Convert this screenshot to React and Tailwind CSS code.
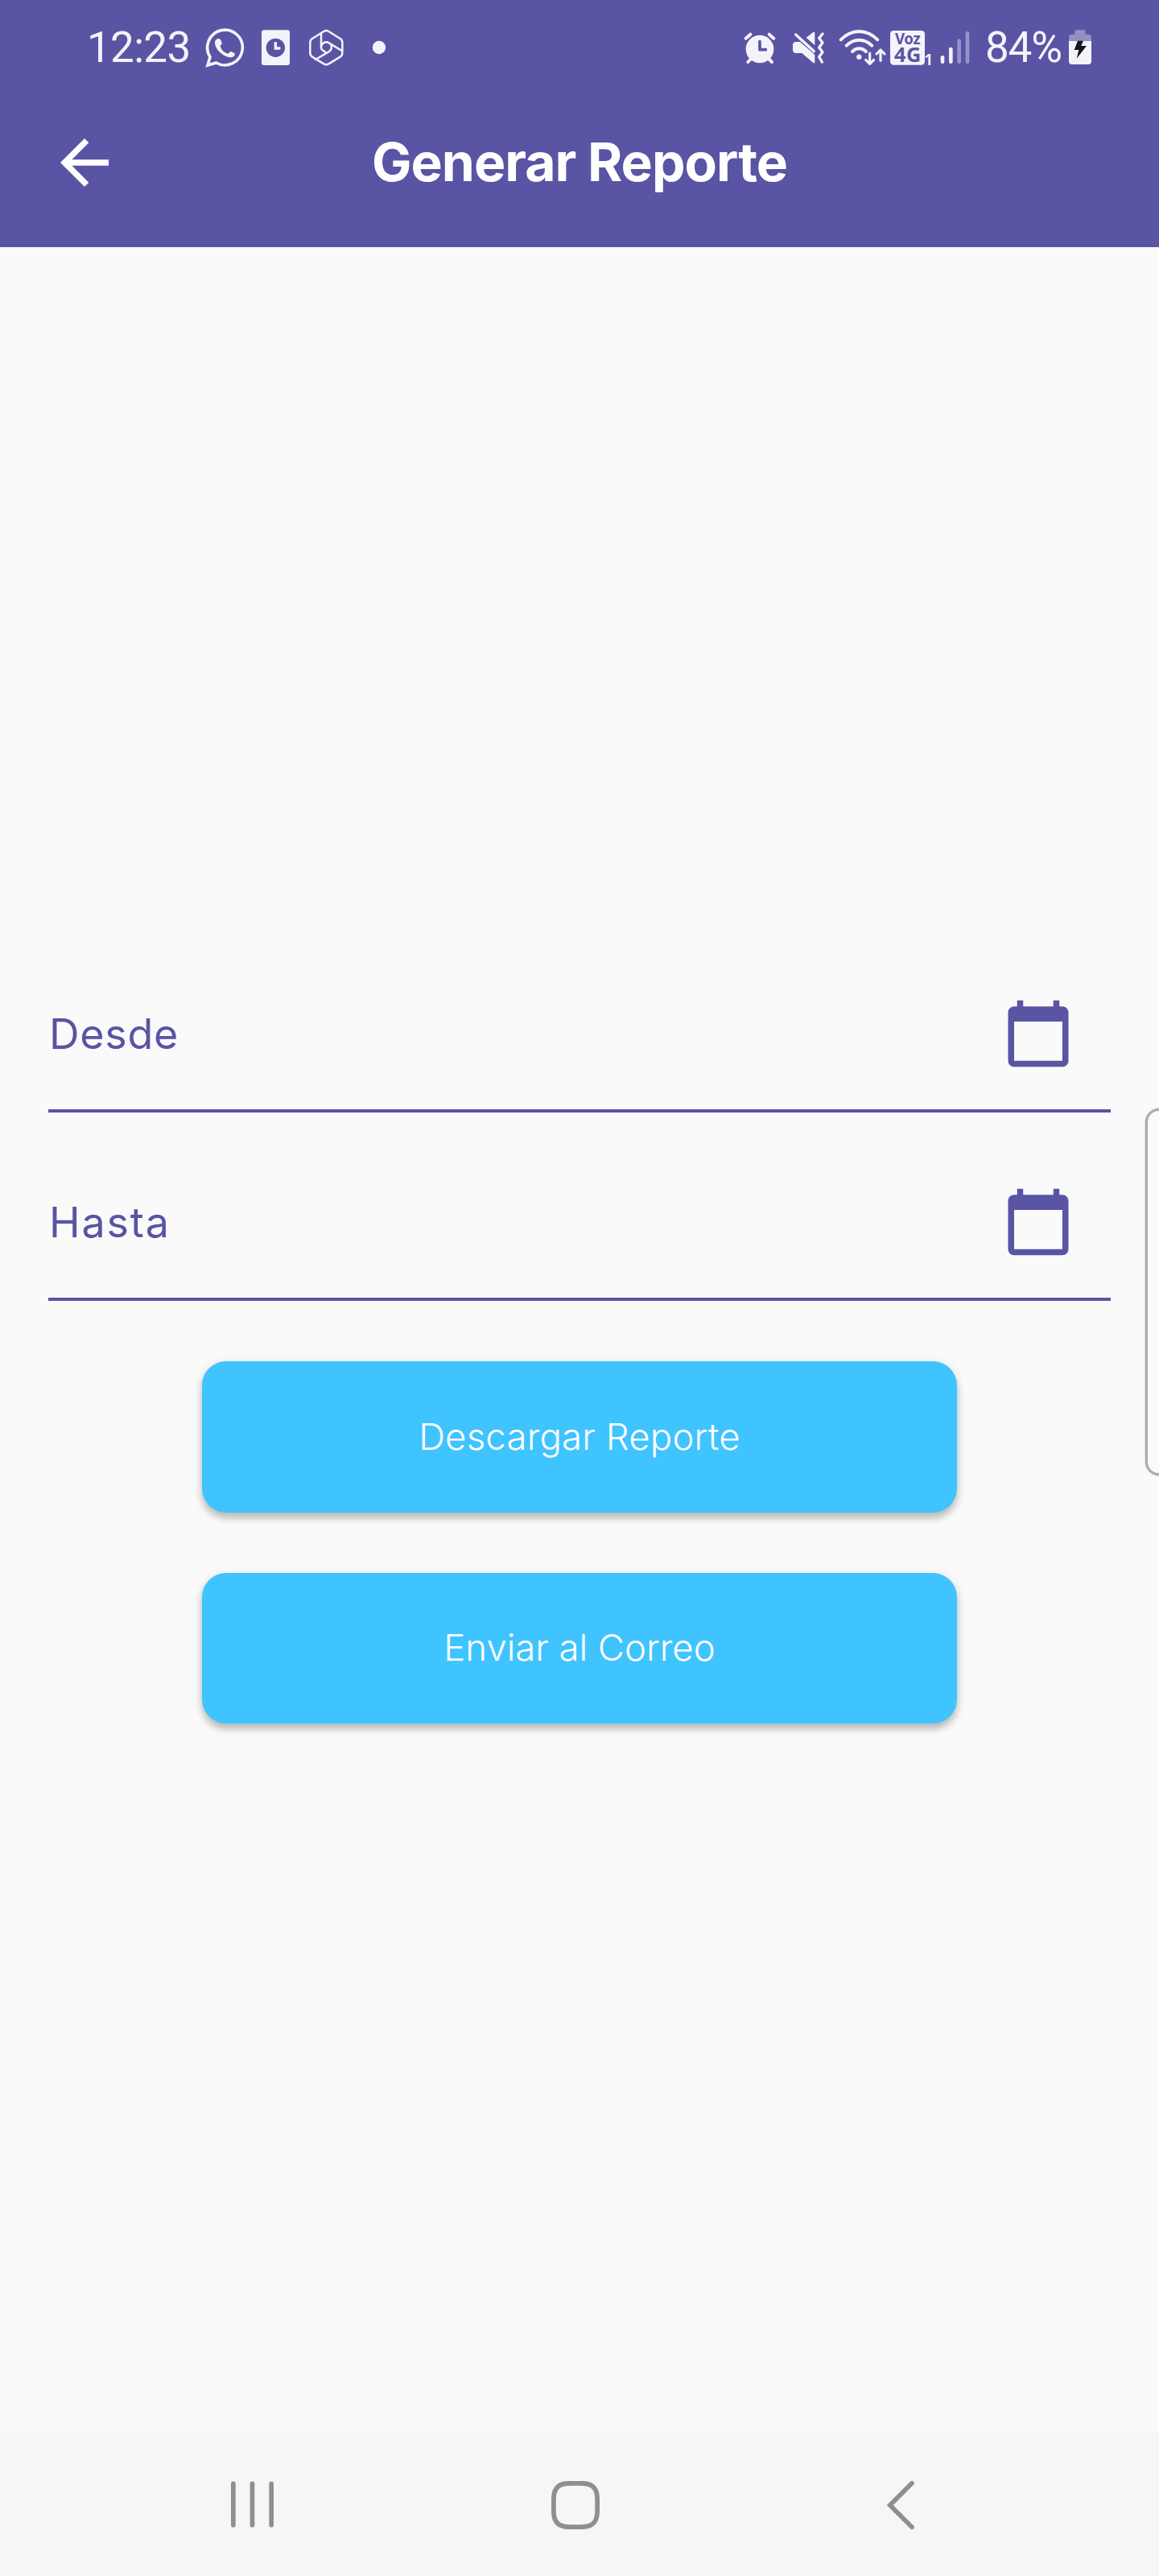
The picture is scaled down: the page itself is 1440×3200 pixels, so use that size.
const INK = "#f4f3fa";
const BRAND = "#5954a3";

function StatusGlyph({ x, w, className = "", children }) {
  return (
    <svg
      viewBox={`${x} 0 ${w} 228`}
      width={w / 3}
      height={76}
      fill="none"
      stroke={INK}
      className={`shrink-0 overflow-visible ${className}`}
      aria-hidden="true"
    >
      {children}
    </svg>
  );
}

function WhatsApp() {
  return (
    <StatusGlyph x={495} w={147} className="ml-[17px]">
      <path d="M513 152A65.5 65.5 0 1 1 536 174L504 183Z" strokeWidth="11" />
      <path
        d="M543 84c8-2 11 7 14 15c2 6-6 9-6 14c4 13 14 22 27 27c5 1 8-9 14-8l13 7c2 9-5 14-12 15c-28 0-62-28-62-56c0-7 4-12 12-14z"
        fill={INK}
        stroke="none"
      />
    </StatusGlyph>
  );
}

function ClockCard() {
  return (
    <StatusGlyph x={702} w={111} className="ml-5">
      <rect x="705" y="52" width="105" height="131" rx="9" fill={INK} stroke="none" />
      <circle cx="757" cy="118" r="35" fill={BRAND} stroke="none" />
      <path d="M757 97V120H775" strokeWidth="10" />
    </StatusGlyph>
  );
}

function HexagonSwirl() {
  return (
    <StatusGlyph x={882} w={129} className="ml-[23px]">
      <g strokeWidth="7.5" strokeLinejoin="round" strokeLinecap="round">
        <path d="M937 57Q946 51 955 57L998 84Q1006 89 1006 98V138Q1006 147 998 152L955 178Q946 184 937 178L894 152Q886 147 886 138V98Q886 89 894 84Z" />
        <path d="M927 63V119Q928 124 934 128L946 137" />
        <path d="M927 113Q932 98 946 97Q952 97 956 100L1004 129" />
        <path d="M964 106Q970 124 955 133L906 162" />
      </g>
    </StatusGlyph>
  );
}

function Dot() {
  return (
    <StatusGlyph x={1116} w={54} className="ml-[35px]">
      <circle cx="1143" cy="117" r="24.5" fill={INK} stroke="none" />
    </StatusGlyph>
  );
}

function AlarmClock() {
  return (
    <StatusGlyph x={72} w={120}>
      <circle cx="132" cy="123" r="52" fill={INK} stroke="none" />
      <g strokeWidth="12" strokeLinecap="round">
        <path d="M80 83L97 68M167 68L184 83" />
        <path d="M88 171L102 156M162 156L177 171" />
      </g>
      <path d="M132 95V125H154" stroke={BRAND} strokeWidth="11" strokeLinecap="round" strokeLinejoin="round" />
    </StatusGlyph>
  );
}

function Muted() {
  return (
    <StatusGlyph x={252} w={123} className="ml-5">
      <path d="M268 96H282L337 144V171Q337 178 331 174L289 138H268Q255 138 255 126V108Q255 96 268 96Z" fill={INK} stroke="none" />
      <path d="M305 80L331 60Q337 58 337 64V109Z" fill={INK} stroke="none" />
      <path d="M266 69L334 131" strokeWidth="10" strokeLinecap="round" />
      <path d="M366 66L353 82L366 99L353 117L366 134L353 152L364 171" strokeWidth="10" strokeLinecap="round" strokeLinejoin="round" />
    </StatusGlyph>
  );
}

function Wifi() {
  return (
    <StatusGlyph x={426} w={180} className="ml-[17px]">
      <g strokeWidth="12" strokeLinecap="round">
        <path d="M434 88Q464 58 502 57Q541 58 571 88" />
        <path d="M455 110Q476 89 502 89Q529 89 550 110" />
        <path d="M477 132Q488 121 502 121Q517 121 528 132" />
      </g>
      <circle cx="502" cy="152" r="9.5" fill={INK} stroke="none" />
      <g strokeWidth="9.5" strokeLinecap="round" strokeLinejoin="round">
        <path d="M542 138V176M527 163L542 178L557 163" />
        <path d="M582 166V128M567 141L582 126L597 141" />
      </g>
    </StatusGlyph>
  );
}

function Volte() {
  return (
    <StatusGlyph x={615} w={159} className="ml-[3px]">
      <rect x="618" y="54" width="129" height="128" rx="13" fill={INK} stroke="none" />
      <g fill={BRAND} stroke="none" fontFamily="Noto Sans, sans-serif" fontWeight="700">
        <text x="636" y="105" fontSize="56" textLength="95">Voz</text>
        <text x="633" y="171" fontSize="76" textLength="100">4G</text>
      </g>
      <text x="744" y="182" fontSize="61" fill={INK} stroke="none" fontFamily="Noto Sans, sans-serif" fontWeight="600">1</text>
    </StatusGlyph>
  );
}

function Signal() {
  return (
    <StatusGlyph x={84} w={111} className="ml-2.5">
      <g fill={INK} stroke="none">
        <rect x="86" y="147" width="14" height="30" rx="7" />
        <rect x="117" y="116" width="14" height="61" rx="7" />
        <rect x="148" y="85" width="14" height="92" rx="7" opacity="0.4" />
        <rect x="179" y="57" width="14" height="120" rx="7" opacity="0.4" />
      </g>
    </StatusGlyph>
  );
}

function Battery() {
  return (
    <StatusGlyph x={561} w={90} className="ml-[3px]">
      <path d="M564 93V80Q564 68 576 68H586V58Q586 52 592 52H620Q626 52 626 58V68H636Q648 68 648 80V93Z" fill={INK} opacity="0.38" stroke="none" />
      <path d="M564 93H648V168Q648 180 636 180H576Q564 180 564 168Z" fill={INK} stroke="none" />
      <path d="M597 92H618L610 111H630L593 158L601 126H584Z" fill="#17161f" stroke="none" />
    </StatusGlyph>
  );
}

function StatusBar() {
  return (
    <div className="flex h-[97px] items-start justify-between pl-[108px] pr-[83px] pt-5 font-[Roboto,sans-serif] text-[53px] leading-none text-[#f4f3fa]">
      <div className="flex h-[76px] items-center">
        <span className="w-[130px] pt-0.5 tracking-[-0.7px]">12:23</span>
        <WhatsApp />
        <ClockCard />
        <HexagonSwirl />
        <Dot />
      </div>
      <div className="flex h-[76px] items-center">
        <AlarmClock />
        <Muted />
        <Wifi />
        <Volte />
        <Signal />
        <span className="ml-[19px] w-[100px] pt-0.5 tracking-[-1.2px]">84%</span>
        <Battery />
      </div>
    </div>
  );
}

function AppBar() {
  return (
    <div className="grid h-[210px] grid-cols-[90px_1fr_90px] items-center px-[60px] text-white">
      <button type="button" aria-label="Atrás">
        <svg viewBox="0 0 24 24" width="90" height="90" fill="currentColor">
          <path d="M20 11H7.83l5.59-5.59L12 4l-8 8 8 8 1.41-1.41L7.83 13H20v-2z" />
        </svg>
      </button>
      <h1 className="pb-[3px] text-center text-[66px] font-bold leading-none tracking-[-1px]">
        Generar Reporte
      </h1>
    </div>
  );
}

function DateField({ label, className }) {
  return (
    <div className="flex h-[193px] items-center justify-between border-b-4 border-[#5954a3] pl-px pr-[45px] text-[#5954a3]">
      <span className={`pt-0.5 text-[52px] leading-none ${className}`}>{label}</span>
      <svg viewBox="0 0 24 24" width="90" height="90" fill="currentColor" aria-hidden="true">
        <path d="M20 3h-1V1h-2v2H7V1H5v2H4c-1.1 0-2 .9-2 2v16c0 1.1.9 2 2 2h16c1.1 0 2-.9 2-2V5c0-1.1-.9-2-2-2zm0 18H4V8h16v13z" />
      </svg>
    </div>
  );
}

function ActionButton({ children, className }) {
  return (
    <button
      type="button"
      className={`w-[938px] rounded-[30px] bg-[#40c4ff] pb-px text-[45.5px] font-[350] leading-none text-white shadow-[0_7px_10px_rgba(0,0,0,0.22),0_2px_14px_rgba(0,0,0,0.09)] ${className}`}
    >
      {children}
    </button>
  );
}

function NavigationBar() {
  return (
    <nav className="grid h-[180px] grid-cols-[627px_177px_627px] items-center bg-[#f6f6f6]">
      <svg viewBox="0 0 56 60" width="56" height="60" fill="#8f8f8f" className="ml-[286px] mt-0.5">
        <rect x="1" y="1.5" width="5.7" height="57" rx="2.8" />
        <rect x="24.6" y="1.5" width="5.7" height="57" rx="2.8" />
        <rect x="48.3" y="1.5" width="5.7" height="57" rx="2.8" />
      </svg>
      <svg viewBox="0 0 60 60" width="60" height="60" fill="none" stroke="#8f8f8f" strokeWidth="5.8" className="ml-[58px] mt-[3px]">
        <path d="M20 3Q30 2.6 40 3C51 3.6 56.4 9 57 20Q57.4 30 57 40C56.4 51 51 56.4 40 57Q30 57.4 20 57C9 56.4 3.6 51 3 40Q2.6 30 3 20C3.6 9 9 3.6 20 3Z" />
      </svg>
      <svg viewBox="0 0 36 62" width="36" height="62" fill="none" stroke="#8f8f8f" strokeWidth="5.8" className="ml-[297px] mt-[3px]">
        <path d="M32 3.8L4.8 31L32 58.2" strokeLinecap="round" />
      </svg>
    </nav>
  );
}

export default function App() {
  return (
    <div className="relative flex h-[3200px] w-[1440px] flex-col overflow-hidden bg-[#fafafa] font-[Inter,sans-serif]">
      <header className="h-[307px] bg-[#5954a3]">
        <StatusBar />
        <AppBar />
      </header>
      <main className="flex flex-1 flex-col px-[60px] pt-[882px]">
        <div className="flex flex-col gap-[41px]">
          <DateField label="Desde" className="tracking-[0.7px]" />
          <DateField label="Hasta" className="tracking-[1.8px]" />
        </div>
        <div className="mt-[75px] flex flex-col items-center gap-[75px]">
          <ActionButton className="h-[188px] tracking-[0.2px]">Descargar Reporte</ActionButton>
          <ActionButton className="h-[187px] tracking-[0px]">Enviar al Correo</ActionButton>
        </div>
      </main>
      <NavigationBar />
      <div className="absolute right-0 top-[1377px] h-[456px] w-[17px] rounded-l-[18px] border-[3px] border-r-0 border-[#aaaaaa] shadow-[0_0_1px_1px_rgba(170,170,170,0.35)]" />
    </div>
  );
}
